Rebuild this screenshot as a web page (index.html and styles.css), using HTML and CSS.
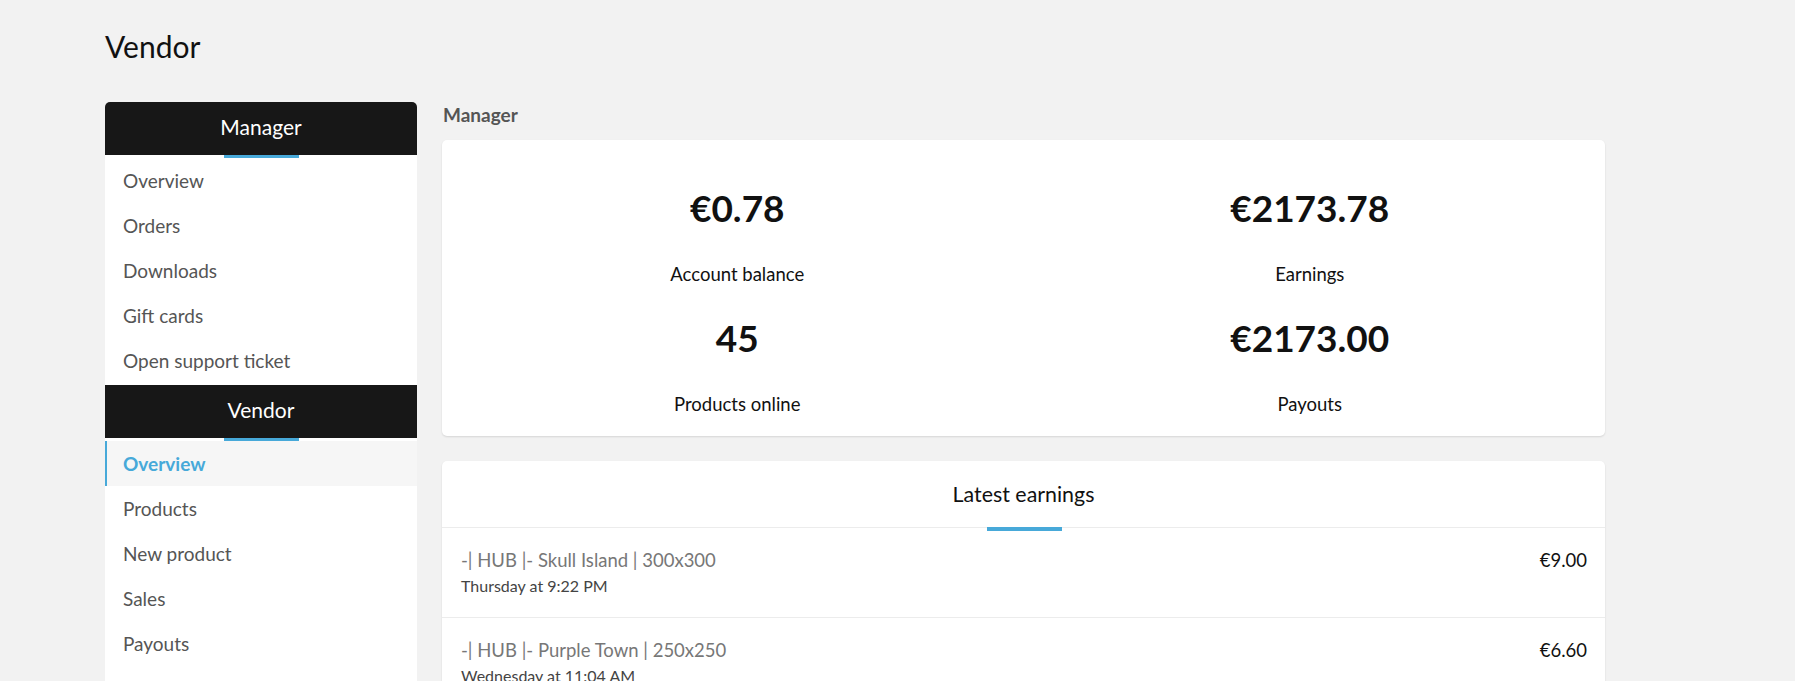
FILE: index.html
```html
<!DOCTYPE html>
<html lang="en">
<head>
<meta charset="utf-8">
<title>Vendor</title>
<link rel="stylesheet" href="styles.css">
</head>
<body>
<div class="page">
  <h1 class="page-title">Vendor</h1>
  <div class="layout">
    <aside class="sidebar">
      <div class="side-head"><span>Manager</span></div>
      <ul class="side-list">
        <li><a href="#">Overview</a></li>
        <li><a href="#">Orders</a></li>
        <li><a href="#">Downloads</a></li>
        <li><a href="#">Gift cards</a></li>
        <li><a href="#">Open support ticket</a></li>
      </ul>
      <div class="side-head"><span>Vendor</span></div>
      <ul class="side-list last">
        <li class="active"><a href="#">Overview</a></li>
        <li><a href="#">Products</a></li>
        <li><a href="#">New product</a></li>
        <li><a href="#">Sales</a></li>
        <li><a href="#">Payouts</a></li>
      </ul>
    </aside>
    <main class="main">
      <div class="section-label">Manager</div>
      <section class="card stats">
        <div class="stat">
          <div class="stat-value">€0.78</div>
          <div class="stat-label">Account balance</div>
        </div>
        <div class="stat">
          <div class="stat-value">€2173.78</div>
          <div class="stat-label">Earnings</div>
        </div>
        <div class="stat">
          <div class="stat-value">45</div>
          <div class="stat-label">Products online</div>
        </div>
        <div class="stat">
          <div class="stat-value">€2173.00</div>
          <div class="stat-label">Payouts</div>
        </div>
      </section>
      <section class="card earnings">
        <div class="card-head"><span>Latest earnings</span></div>
        <div class="earn-row">
          <div class="earn-info">
            <div class="earn-title">-| HUB |- Skull Island | 300x300</div>
            <div class="earn-date">Thursday at 9:22 PM</div>
          </div>
          <div class="earn-amount">€9.00</div>
        </div>
        <div class="earn-row">
          <div class="earn-info">
            <div class="earn-title">-| HUB |- Purple Town | 250x250</div>
            <div class="earn-date">Wednesday at 11:04 AM</div>
          </div>
          <div class="earn-amount">€6.60</div>
        </div>
        <div class="earn-row">
          <div class="earn-info">
            <div class="earn-title">-| HUB |- Skull Island | 300x300</div>
            <div class="earn-date">Tuesday at 4:15 PM</div>
          </div>
          <div class="earn-amount">€9.00</div>
        </div>
      </section>
    </main>
  </div>
</div>
</body>
</html>
```
FILE: styles.css
```css
* { box-sizing: border-box; }
html, body {
  margin: 0;
  padding: 0;
  background: #f2f2f2;
  font-family: Lato, "Open Sans", "Liberation Sans", sans-serif;
  color: #111;
}
.page {
  padding: 28px 0 0 105px;
}
.page-title {
  margin: 0;
  font-size: 30px;
  font-weight: 400;
  line-height: 36px;
  color: #111;
}
.layout {
  display: flex;
  gap: 25px;
  margin-top: 38px;
  align-items: flex-start;
}
.sidebar {
  width: 312px;
  flex: 0 0 312px;
  background: #fff;
  border-radius: 5px 5px 0 0;
  overflow: hidden;
}
.side-head {
  position: relative;
  height: 53px;
  background: #171717;
  color: #fff;
  font-size: 21px;
  line-height: 49px;
  text-align: center;
  margin-bottom: 3px;
}
.side-head::after {
  content: "";
  position: absolute;
  left: 50%;
  bottom: -3px;
  width: 75px;
  height: 3px;
  margin-left: -37px;
  background: #47a9d9;
}
.side-list {
  list-style: none;
  margin: 0;
  padding: 0 0 2px;
}
.side-list.last { padding-bottom: 30px; }
.side-list li a {
  display: block;
  height: 45px;
  line-height: 45px;
  padding-left: 18px;
  font-size: 19px;
  color: #555;
  text-decoration: none;
}
.side-list li.active a {
  background: #f6f6f6;
  border-left: 2px solid #47a9d9;
  padding-left: 16px;
  color: #47a9d9;
  font-weight: 700;
}
.main {
  width: 1163px;
  flex: 0 0 1163px;
}
.section-label {
  margin-top: 2px;
  font-size: 19px;
  line-height: 22px;
  font-weight: 700;
  color: #555;
  padding-left: 1px;
  margin-bottom: 14px;
}
.card {
  background: #fff;
  border-radius: 5px;
  box-shadow: 0 1px 2px rgba(0,0,0,0.12);
}
.stats {
  display: grid;
  grid-template-columns: 1fr 1fr;
  row-gap: 31px;
  padding: 46px 9px 21px;
  margin-bottom: 25px;
}
.stat { text-align: center; }
.stat-value {
  font-size: 37px;
  font-weight: 700;
  line-height: 44px;
  color: #111;
  margin-bottom: 33px;
}
.stat-label {
  font-size: 18.5px;
  line-height: 22px;
  color: #111;
}
.card-head {
  position: relative;
  text-align: center;
  font-size: 21.4px;
  line-height: 26px;
  padding: 20px 0 20px;
  border-bottom: 1px solid #ececec;
  color: #111;
}
.card-head::after {
  content: "";
  position: absolute;
  left: 50%;
  bottom: -4px;
  width: 75px;
  height: 4px;
  margin-left: -37px;
  background: #47a9d9;
}
.earn-row {
  display: flex;
  justify-content: space-between;
  align-items: flex-start;
  padding: 21px 18px 22px 19px;
  border-bottom: 1px solid #ececec;
}
.earn-title {
  font-size: 18.5px;
  line-height: 22px;
  color: #777;
}
.earn-date {
  margin-top: 5px;
  font-size: 16px;
  line-height: 19px;
  color: #444;
}
.earn-amount {
  font-size: 18.5px;
  line-height: 22px;
  color: #111;
}
```
